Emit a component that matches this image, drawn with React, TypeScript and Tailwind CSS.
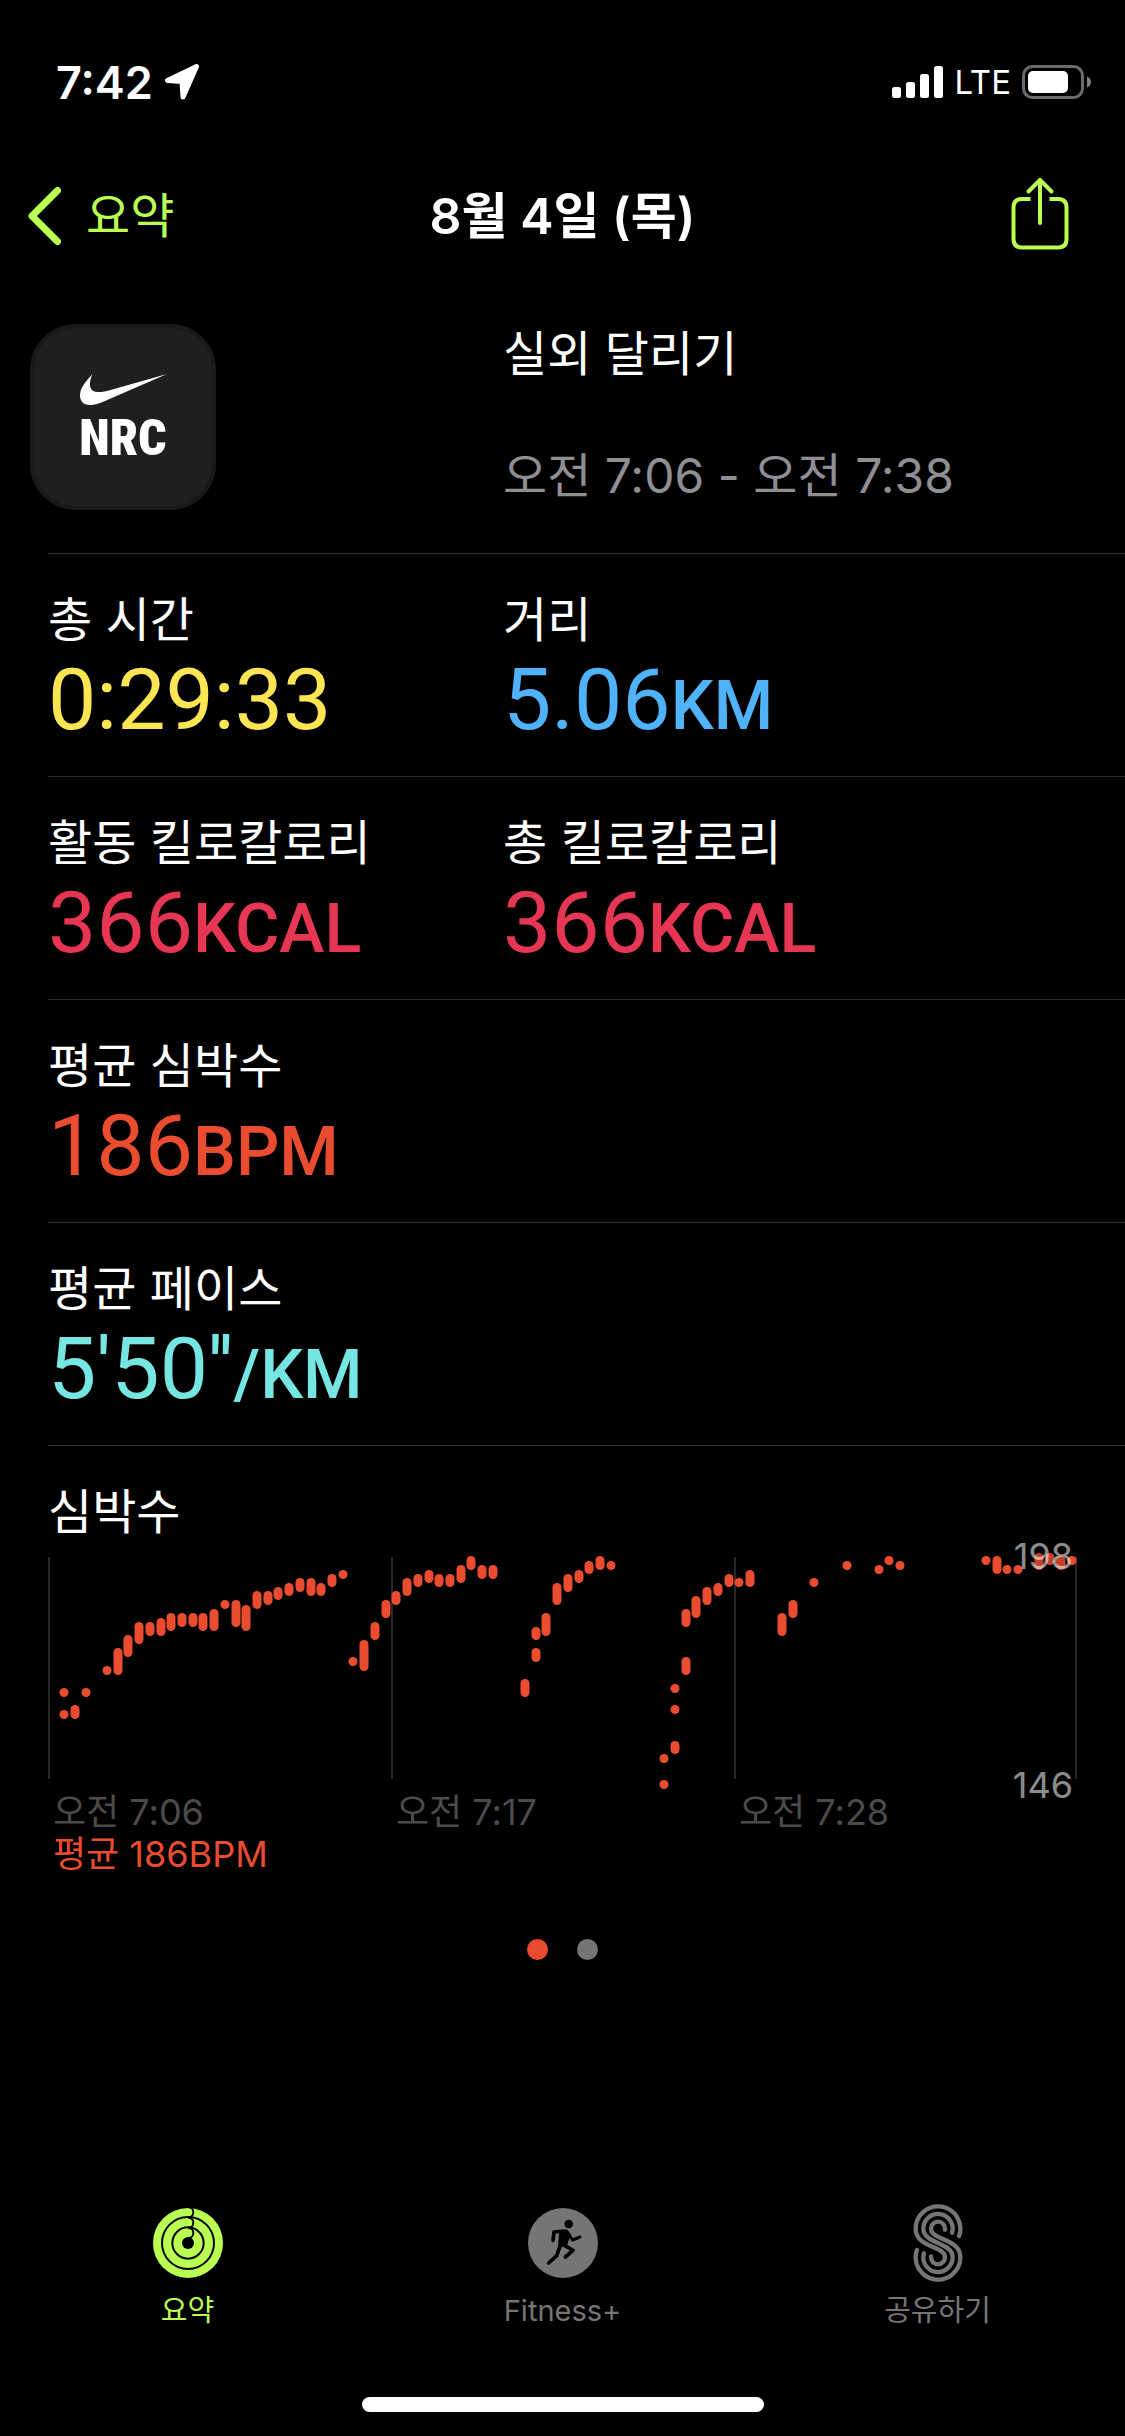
import type { ReactNode } from 'react';

interface Metric {
  label: string;
  value: string;
  unit?: string;
  color: string;
}

const metricRows: Metric[][] = [
  [
    { label: '총 시간', value: '0:29:33', color: 'text-[#fbe552]' },
    { label: '거리', value: '5.06', unit: 'KM', color: 'text-[#50b2f9]' },
  ],
  [
    { label: '활동 킬로칼로리', value: '366', unit: 'KCAL', color: 'text-[#e73654]' },
    { label: '총 킬로칼로리', value: '366', unit: 'KCAL', color: 'text-[#e73654]' },
  ],
  [{ label: '평균 심박수', value: '186', unit: 'BPM', color: 'text-[#ea4c30]' }],
  [{ label: '평균 페이스', value: "5'50''", unit: '/KM', color: 'text-[#75e6e2]' }],
];

// [x center, top, bottom] of each heart rate range
const heartRate: [number, number, number][] = [
  [16, 131, 140], [16, 153, 162], [27, 148, 162], [38, 131, 140], [59, 109, 118],
  [70, 91, 118], [80, 78, 100], [91, 65, 87], [102, 65, 79], [113, 61, 79],
  [123, 56, 74], [134, 56, 70], [145, 56, 70], [155, 56, 74], [166, 52, 74],
  [177, 43, 52], [188, 43, 70], [198, 48, 74], [209, 34, 52], [220, 34, 48],
  [230, 30, 43], [241, 26, 39], [252, 21, 35], [263, 21, 39], [273, 26, 39],
  [284, 17, 30], [295, 13, 22], [305, 100, 109], [316, 83, 114], [327, 65, 83],
  [338, 43, 61], [348, 34, 48], [359, 21, 39], [370, 17, 30], [381, 13, 26],
  [391, 17, 30], [402, 17, 30], [413, 8, 26], [423, -1, 13], [434, 8, 22],
  [445, 8, 22], [477, 122, 140], [488, 70, 83], [488, 91, 105], [498, 56, 79],
  [509, 26, 48], [520, 17, 35], [531, 13, 26], [541, 4, 17], [552, -1, 13],
  [563, 4, 13], [616, 197, 206], [616, 223, 232], [627, 127, 136], [627, 148, 157],
  [627, 184, 197], [638, 52, 70], [638, 100, 118], [648, 39, 61], [659, 30, 48],
  [670, 26, 39], [681, 17, 30], [691, 21, 30], [702, 13, 30], [734, 56, 79],
  [745, 43, 61], [766, 21, 30], [799, 4, 13], [831, 8, 17], [841, -1, 8],
  [852, 4, 13], [938, -1, 8], [949, -1, 17], [959, 8, 17], [970, 8, 17],
  [991, -4, 13], [1002, -4, 8], [1013, -1, 13], [1024, -1, 8],
];

const gridLines = [0, 343, 686, 1027];
const times = ['오전 7:06', '오전 7:17', '오전 7:28'];

function StatusBar() {
  return (
    <div className="flex h-[132px] items-center justify-between pt-8 pr-[33px] pl-14">
      <div className="flex items-center gap-3">
        <span className="text-[45px] leading-none font-semibold">7:42</span>
        <svg viewBox="0 0 34 36" className="h-9 w-[34px]" aria-hidden="true">
          <path
            d="M31.5 2.5 L2.5 16.5 L17 17.5 L18 33 Z"
            fill="white"
            stroke="white"
            strokeWidth="5"
            strokeLinejoin="round"
          />
        </svg>
      </div>
      <div className="flex items-center gap-[11px]">
        <svg viewBox="0 0 51 32" className="h-8 w-[51px]" fill="white" aria-hidden="true">
          <rect x="0" y="21" width="9" height="11" rx="2.5" />
          <rect x="14" y="16" width="9" height="16" rx="2.5" />
          <rect x="28" y="8" width="9" height="24" rx="2.5" />
          <rect x="42" y="0" width="9" height="32" rx="2.5" />
        </svg>
        <span className="text-[33px] leading-none">LTE</span>
        <svg viewBox="0 0 70 34" className="h-[34px] w-[70px]" aria-hidden="true">
          <rect x="1.5" y="1.5" width="59" height="31" rx="9" fill="none" stroke="#6b6b6b" strokeWidth="3" />
          <rect x="6" y="6" width="40" height="22" rx="5" fill="white" />
          <path d="M65 11.5 Q69 13 69 17 Q69 21 65 22.5 Z" fill="#808080" />
        </svg>
      </div>
    </div>
  );
}

function NavBar() {
  return (
    <header className="grid h-[168px] grid-cols-3 items-center px-7 text-[#bafe51]">
      <button type="button" className="flex items-center gap-[25px] text-left">
        <svg viewBox="0 0 33 58" className="h-[58px] w-[33px]" aria-hidden="true">
          <path
            d="M29.5 3.5 L4 29 L29.5 54.5"
            fill="none"
            stroke="currentColor"
            strokeWidth="7"
            strokeLinecap="round"
            strokeLinejoin="round"
          />
        </svg>
        <span className="text-[48px] leading-[60px]">요약</span>
      </button>
      <h1 className="text-center text-[50px] leading-[60px] font-semibold whitespace-nowrap text-white">8월 4일 (목)</h1>
      <button type="button" aria-label="공유" className="mr-7 justify-self-end pb-1">
        <svg
          viewBox="0 0 58 74"
          className="h-[74px] w-[58px]"
          fill="none"
          stroke="currentColor"
          strokeWidth="4"
          strokeLinecap="round"
          strokeLinejoin="round"
          aria-hidden="true"
        >
          <path d="M19.5 22 H11 Q2.5 22 2.5 30.5 V62 Q2.5 70.5 11 70.5 H47 Q55.5 70.5 55.5 62 V30.5 Q55.5 22 47 22 H38.5" strokeLinecap="butt" />
          <path d="M29 3 V46" />
          <path d="M17.5 14.5 L29 3 L40.5 14.5" />
        </svg>
      </button>
    </header>
  );
}

function WorkoutSummary() {
  return (
    <section className="flex pt-6">
      <div className="w-[503px] shrink-0 pl-[30px]">
        <div className="flex size-[186px] flex-col items-center rounded-[46px] border-4 border-[#191919] bg-[#1f1f1f] pt-[46px]">
          <svg viewBox="0 0 87 31" className="h-[31px] w-[87px]" fill="white" aria-hidden="true">
            <path d="M87 0 L25 27 C18 30 14 31 10 31 C3 31 0 27 0 21 C0 14 6 7 12.5 0 C9 8 8 17 17 18 C20 18 23 18 27 17 Z" />
          </svg>
          <span className="font-['Liberation_Sans_Narrow','Roboto_Condensed',Roboto,sans-serif] text-[50px] leading-[66px] font-black">
            NRC
          </span>
        </div>
      </div>
      <div className="flex flex-col gap-[62px] text-[48px] leading-[60px]">
        <p>실외 달리기</p>
        <p className="text-[#8e8e93]">오전 7:06 - 오전 7:38</p>
      </div>
    </section>
  );
}

function MetricCell({ label, value, unit, color }: Metric) {
  return (
    <div className="w-[455px]">
      <dt className="text-[48px] leading-[60px]">{label}</dt>
      <dd className={`font-[Roboto,sans-serif] text-[86px] leading-[100px] whitespace-nowrap ${color}`}>
        {value}
        {unit ? <span className="text-[68px] leading-none font-medium">{unit}</span> : null}
      </dd>
    </div>
  );
}

function HeartRateChart() {
  return (
    <section className="px-12 pt-9">
      <h2 className="text-[48px] leading-[60px]">심박수</h2>
      <div className="relative mt-[15px]">
        <svg viewBox="0 0 1029 222" className="block w-full overflow-visible" role="img" aria-label="심박수">
          {gridLines.map((x) => (
            <rect key={x} x={x} y="0" width="2" height="222" fill="#282828" />
          ))}
          {heartRate.map(([x, top, bottom]) => (
            <rect
              key={`${x}-${top}`}
              x={x - 4.5}
              y={top}
              width="9"
              height={bottom - top}
              rx="4.5"
              fill={x > 990 && x < 1020 ? '#c4402a' : '#ea4c30'}
            />
          ))}
        </svg>
        <span className="absolute -top-[22px] right-1 text-[36px] leading-[42px] text-white/55">198</span>
        <span className="absolute -bottom-[27px] right-1 text-[36px] leading-[42px] text-white/55">146</span>
      </div>
      <div className="mt-3 grid grid-cols-3 text-[36px] leading-[42px] text-[#4b4b4b]">
        {times.map((time) => (
          <span key={time} className="pl-[5px]">
            {time}
          </span>
        ))}
      </div>
      <p className="pl-[5px] text-[36px] leading-[42px] text-[#ea4c30]">평균 186BPM</p>
    </section>
  );
}

function RingsIcon() {
  return (
    <svg viewBox="0 0 210 210" className="size-[70px]" fill="none" stroke="black" strokeWidth="6" aria-hidden="true">
      <circle cx="105" cy="105" r="105" fill="currentColor" stroke="none" />
      <circle cx="105" cy="105" r="78" />
      <circle cx="105" cy="105" r="47" />
      <circle cx="105" cy="105" r="18" fill="black" stroke="none" />
      <path d="M106 -2 a15 15 0 0 1 0 30 M106 29 a15 15 0 0 1 0 30 M106 60 a15 15 0 0 1 0 30" />
    </svg>
  );
}

function RunnerIcon() {
  return (
    <svg
      viewBox="0 0 210 210"
      className="size-[70px]"
      fill="none"
      stroke="black"
      strokeWidth="11"
      strokeLinecap="round"
      strokeLinejoin="round"
      aria-hidden="true"
    >
      <circle cx="105" cy="105" r="105" fill="currentColor" stroke="none" />
      <circle cx="122" cy="48" r="13" fill="black" stroke="none" />
      <path d="M75 97 L78 72 L108 69" />
      <path d="M116 72 L134 96 L156 87" strokeWidth="9" />
      <path d="M99 72 L115 70 L122 80 L112 110 L96 112 Z" fill="black" />
      <path d="M106 110 L135 127 L112 147" />
      <path d="M97 112 L86 143 L62 165" />
    </svg>
  );
}

function SharingIcon() {
  return (
    <svg
      viewBox="0 0 148 234"
      className="h-[78px] w-[50px]"
      fill="none"
      stroke="currentColor"
      strokeWidth="13"
      strokeLinecap="round"
      aria-hidden="true"
    >
      <path d="M137.3 96 A67 67 0 1 0 7 74 C7 132 95 125 95 160 A21 21 0 0 1 53 160 V157" />
      <path d="M116.3 86 A44 44 0 1 0 30 74 C30 120 118 114 118 160 A44 44 0 1 1 31.7 148" />
      <path d="M95 77 V74 A21 21 0 0 0 53 74 C53 109 141 102 141 160 A67 67 0 1 1 10.7 138" />
    </svg>
  );
}

function TabButton({ label, active, children }: { label: string; active?: boolean; children: ReactNode }) {
  return (
    <button
      type="button"
      aria-current={active ? 'page' : undefined}
      className={`flex flex-col items-center gap-[11px] ${active ? 'text-[#bafe51]' : 'text-[#757575]'}`}
    >
      <span className="flex h-[78px] items-center">{children}</span>
      <span className="text-[29px] leading-9">{label}</span>
    </button>
  );
}

export default function App() {
  return (
    <div className="flex min-h-screen flex-col bg-black font-[Inter,'Noto_Sans_CJK_KR',sans-serif] text-white">
      <StatusBar />
      <NavBar />
      <main className="flex-1">
        <WorkoutSummary />
        <dl className="mt-[43px] ml-12">
          {metricRows.map((row) => (
            <div key={row[0].label} className="flex border-t border-[#2e2e2e] pt-9 pb-[26px]">
              {row.map((metric) => (
                <MetricCell key={metric.label} {...metric} />
              ))}
            </div>
          ))}
        </dl>
        <div className="ml-12 border-t border-[#2e2e2e]" />
        <HeartRateChart />
        <div className="mt-16 flex justify-center gap-[29px]">
          <span className="size-[21px] rounded-full bg-[#ea4c30]" />
          <span className="size-[21px] rounded-full bg-[#757575]" />
        </div>
      </main>
      <footer className="pb-6">
        <nav className="grid grid-cols-3">
          <TabButton label="요약" active>
            <RingsIcon />
          </TabButton>
          <TabButton label="Fitness+">
            <RunnerIcon />
          </TabButton>
          <TabButton label="공유하기">
            <SharingIcon />
          </TabButton>
        </nav>
        <div className="mx-auto mt-[68px] h-[15px] w-[402px] rounded-full bg-white" />
      </footer>
    </div>
  );
}
